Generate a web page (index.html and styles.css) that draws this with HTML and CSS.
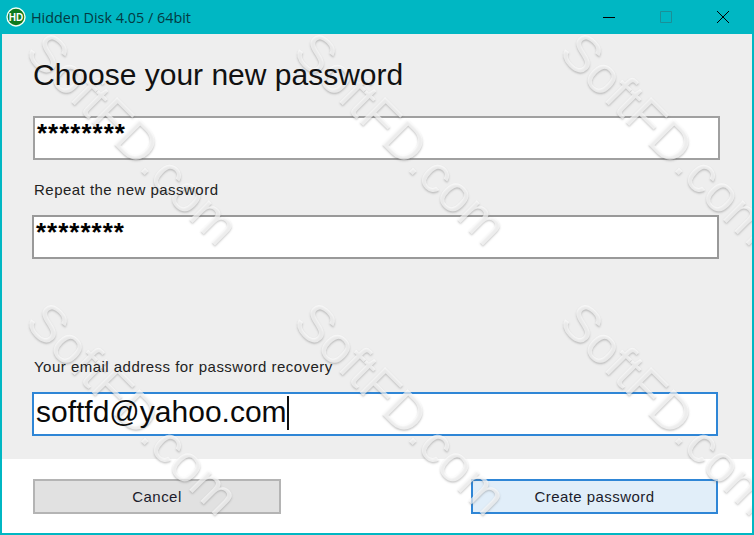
FILE: index.html
```html
<!DOCTYPE html>
<html lang="en">
<head>
    <meta charset="UTF-8">
    <meta name="viewport" content="width=device-width, initial-scale=1.0">
    <title>Hidden Disk 4.05 / 64bit</title>
    <link rel="stylesheet" href="styles.css">
</head>
<body>
    <div class="window">
        <div class="titlebar">
            <svg class="app-icon" width="20" height="20" viewBox="0 0 20 20">
                <circle cx="10" cy="10" r="9" fill="#0f7a1c" stroke="#f2fff4" stroke-width="1.4"/>
                <text x="10" y="13.6" text-anchor="middle" class="app-icon-text">HD</text>
            </svg>
            <span class="app-title">Hidden Disk 4.05 / 64bit</span>
            <div class="controls">
                <svg width="14" height="14" viewBox="0 0 14 14"><path d="M1 7.5h12" stroke="#000" fill="none"/></svg>
                <svg width="14" height="14" viewBox="0 0 14 14"><path d="M1.5 1.5h11v11h-11z" stroke="#1a8f98" fill="none"/></svg>
                <svg width="14" height="14" viewBox="0 0 14 14"><path d="M1 1l12 12M13 1L1 13" stroke="#000" fill="none"/></svg>
            </div>
        </div>

        <div class="content">
            <h1 class="over">Choose your new password</h1>
            <div class="field field-one stars"><span class="over">********</span></div>
            <label class="over label-repeat">Repeat the new password</label>
            <div class="field field-two stars"><span class="over">********</span></div>
            <label class="over label-email">Your email address for password recovery</label>
            <div class="field field-three email"><span class="over">softfd@yahoo.com</span><span class="caret over"></span></div>
        </div>

        <div class="footer">
            <button type="button" class="btn btn-cancel"><span class="over">Cancel</span></button>
            <button type="button" class="btn btn-create"><span class="over">Create password</span></button>
        </div>

        <div class="watermarks">
            <span class="mark mark-a1">SoftFD.com</span>
            <span class="mark mark-a2">SoftFD.com</span>
            <span class="mark mark-a3">SoftFD.com</span>
            <span class="mark mark-b1">SoftFD.com</span>
            <span class="mark mark-b2">SoftFD.com</span>
            <span class="mark mark-b3">SoftFD.com</span>
        </div>
    </div>
</body>
</html>
```

FILE: styles.css
```css
* {
    box-sizing: border-box;
}

html, body {
    margin: 0;
    height: 100%;
}

body {
    font-family: "Liberation Sans", Arial, sans-serif;
    overflow: hidden;
}

.window {
    position: relative;
    z-index: 0;
    width: 754px;
    height: 535px;
    display: flex;
    flex-direction: column;
    border: 2px solid #00b7c3;
    border-top: none;
    overflow: hidden;
    background: #fff;
}

/* text sits above the watermark layer */
.over {
    position: relative;
    z-index: 2;
}

.titlebar {
    position: relative;
    z-index: 2;
    height: 34px;
    flex: none;
    display: flex;
    align-items: center;
    background: #00b7c3;
    margin: 0 -2px;
    padding-left: 6px;
}

.app-icon {
    flex: none;
}

.app-icon-text {
    font-family: "Liberation Sans", sans-serif;
    font-size: 10px;
    font-weight: bold;
    fill: #fff;
}

.app-title {
    margin-left: 5px;
    font-family: "Open Sans", sans-serif;
    font-size: 14.4px;
    color: #043a42;
}

.controls {
    margin-left: auto;
    display: flex;
    align-items: center;
    gap: 43px;
    padding-right: 24px;
}

.content {
    height: 425px;
    flex: none;
    background: #eeeeee;
    padding: 24px 32px 0 30px;
}

h1 {
    margin: 0 0 0 1px;
    height: 58px;
    font-size: 30px;
    font-weight: normal;
    line-height: 34px;
    color: #111;
}

label {
    display: block;
    font-size: 15px;
    letter-spacing: 0.48px;
    line-height: 18px;
    color: #222;
    margin-left: 2px;
}

.field {
    height: 44px;
    background: #fff;
    border: 2px solid #a0a0a0;
    overflow: hidden;
    white-space: nowrap;
    color: #000;
}

.stars {
    font-size: 26px;
    font-weight: bold;
    letter-spacing: 1px;
    line-height: 30px;
    padding-left: 2px;
}

.field-one {
    width: 687px;
    margin-left: 1px;
}

.field-two {
    width: 687px;
    border-color: #999;
}

.label-repeat {
    margin-top: 21px;
    margin-bottom: 16px;
}

.label-email {
    margin-top: 99px;
    margin-bottom: 16px;
}

.field-three {
    width: 686px;
    border-color: #2f86d6;
}

.email {
    font-size: 30px;
    line-height: 36px;
    padding-left: 2px;
    color: #0a0a0a;
}

.caret {
    display: inline-block;
    width: 2px;
    height: 34px;
    background: #111;
    vertical-align: top;
    margin-top: 2px;
}

.footer {
    flex: 1;
    display: flex;
    justify-content: space-between;
    align-items: flex-start;
    background: #fff;
    padding: 20px 34px 0 31px;
}

.btn {
    height: 35px;
    font-family: "Liberation Sans", Arial, sans-serif;
    font-size: 15px;
    letter-spacing: 0.45px;
    color: #1c1c2c;
    padding: 0;
    border: 2px solid;
    cursor: pointer;
}

.btn-cancel {
    width: 248px;
    background: #e1e1e1;
    border-color: #b4b4b4;
}

.btn-create {
    width: 247px;
    background: #e1eef9;
    border-color: #2f86d6;
}

/* site watermark, drawn over the panels but under the text */
.watermarks {
    position: absolute;
    inset: 0;
    z-index: 1;
    pointer-events: none;
}

.mark {
    position: absolute;
    font-family: "Liberation Sans", Arial, sans-serif;
    font-size: 52px;
    line-height: 54px;
    color: rgba(255, 255, 255, 0.65);
    text-shadow: 1px 1px 2px rgba(100, 100, 100, 0.34);
    transform: rotate(45deg);
    transform-origin: left center;
    white-space: nowrap;
}

.mark-a1 { left: 34px; top: 14px; }
.mark-a2 { left: 302px; top: 14px; }
.mark-a3 { left: 568px; top: 14px; }
.mark-b1 { left: 34px; top: 284px; }
.mark-b2 { left: 302px; top: 284px; }
.mark-b3 { left: 568px; top: 284px; }
```
